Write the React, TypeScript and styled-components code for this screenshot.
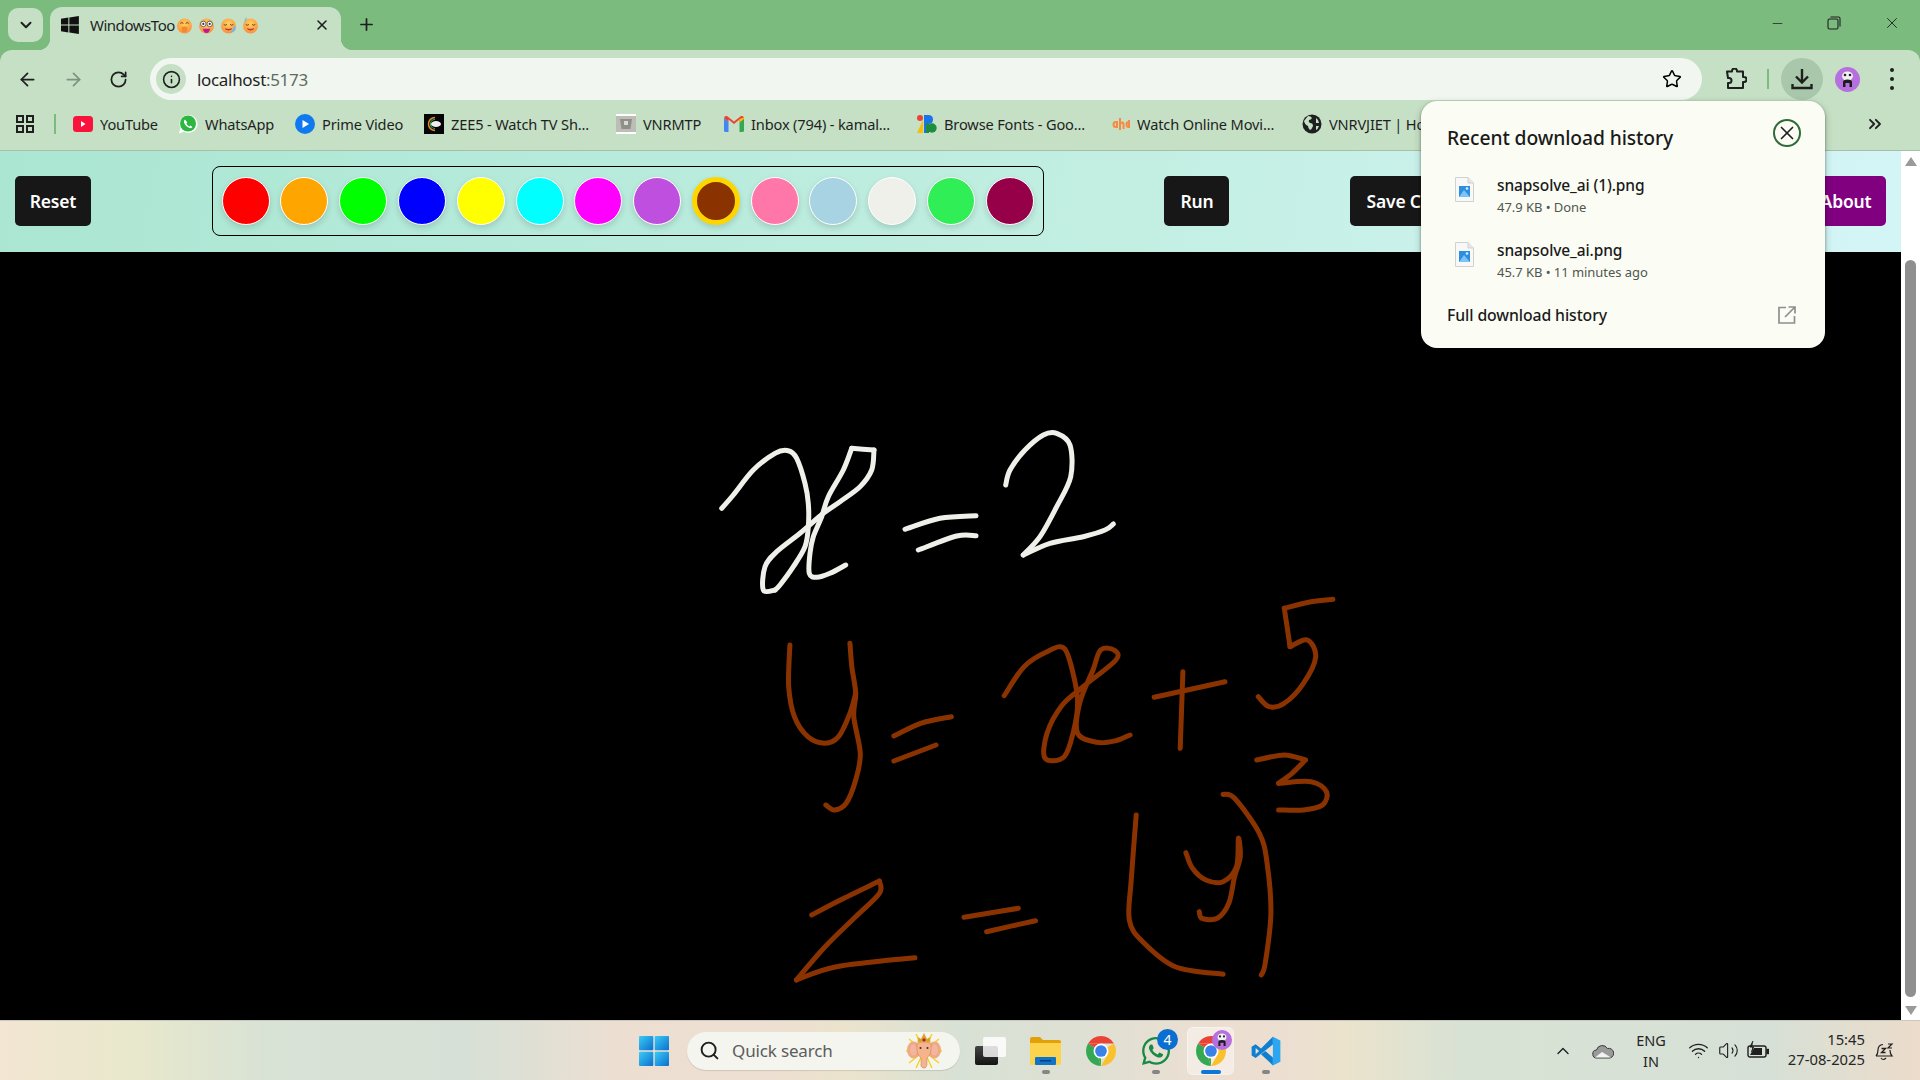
import React from 'react';
import styled, { createGlobalStyle } from 'styled-components';
import { ArrowLeft, ArrowRight, RotateCw, Info, Star, X, Plus, ChevronDown, ChevronUp, ChevronsRight, Search, Wifi, Volume2, Minus } from 'lucide-react';
import { FaWhatsapp } from 'react-icons/fa';

const UI = '"Noto Sans", "Open Sans", sans-serif';

const Global = createGlobalStyle`
  html, body { margin: 0; padding: 0; background: #000; }
  * { box-sizing: border-box; }
`;

const Screen = styled.div`
  position: relative;
  width: 1920px;
  height: 1080px;
  overflow: hidden;
  display: flex;
  flex-direction: column;
  font-family: ${UI};
  background: #7bbb7e;
`;

/* ---------- tab strip ---------- */
const TabStrip = styled.div`
  height: 50px;
  flex: none;
  display: flex;
  align-items: flex-end;
  padding-left: 8px;
  background: #7bbb7e;
`;
const TabSearch = styled.div`
  width: 35px;
  height: 34px;
  margin-bottom: 8px;
  border-radius: 10px;
  background: #c5e0c5;
  display: flex;
  align-items: center;
  justify-content: center;
  color: #1f1f1f;
`;
const Tab = styled.div`
  position: relative;
  width: 291px;
  height: 43px;
  margin-left: 7px;
  padding: 0 11px 7px 11px;
  border-radius: 12px 12px 0 0;
  background: #c5e0c5;
  display: flex;
  align-items: center;
  &::before, &::after {
    content: '';
    position: absolute;
    bottom: 0;
    width: 12px;
    height: 12px;
  }
  &::before { left: -12px; background: radial-gradient(circle at 0 0, transparent 12px, #c5e0c5 12.5px); }
  &::after { right: -12px; background: radial-gradient(circle at 100% 0, transparent 12px, #c5e0c5 12.5px); }
`;
const TabTitle = styled.span`
  margin-left: 11px;
  font-size: 15px;
  letter-spacing: -0.45px;
  color: #1f1f1f;
  width: 85px;
  white-space: nowrap;
`;
const EmojiRow = styled.span`
  display: flex;
  align-items: center;
  gap: 5px;
  width: 134px;
  margin-left: 1px;
`;
const TabClose = styled.span`
  display: flex;
  margin-left: 5px;
  color: #1f1f1f;
`;
const NewTab = styled.div`
  margin: 0 0 16px 16px;
  display: flex;
  color: #1f1f1f;
`;
const WinControls = styled.div`
  margin-left: auto;
  height: 50px;
  display: flex;
  align-items: center;
  padding-right: 19px;
  gap: 42px;
  padding-bottom: 4px;
  color: #1f1f1f;
`;

/* ---------- browser toolbar ---------- */
const Toolbar = styled.div`
  height: 50px;
  flex: none;
  background: #c5e0c5;
  border-radius: 12px 12px 0 0;
  display: flex;
  align-items: flex-start;
  padding-top: 8px;
`;
const NavIcons = styled.div`
  width: 150px;
  height: 42px;
  display: flex;
  align-items: center;
  padding-left: 17px;
  gap: 25px;
  color: #1f1f1f;
`;
const Omnibox = styled.div`
  width: 1552px;
  height: 42px;
  border-radius: 21px;
  background: #f1f7f0;
  display: flex;
  align-items: center;
  padding: 0 20px 0 6px;
`;
const InfoChip = styled.div`
  width: 30px;
  height: 30px;
  border-radius: 50%;
  background: #c5e0c5;
  display: flex;
  align-items: center;
  justify-content: center;
  color: #1f1f1f;
`;
const UrlText = styled.span`
  margin-left: 11px;
  flex: 1;
  font-size: 17px;
  letter-spacing: -0.32px;
  color: #1f1f1f;
`;
const UrlPort = styled.span`
  color: #5d6b5f;
`;
const ToolIcons = styled.div`
  flex: 1;
  height: 42px;
  display: flex;
  align-items: center;
  padding-left: 23px;
  color: #1f1f1f;
`;
const Divider = styled.span`
  width: 2px;
  height: 20px;
  background: #7bbb7e;
  margin: 0 12px 0 20px;
`;
const DownloadBtn = styled.div`
  width: 42px;
  height: 42px;
  margin-right: 12px;
  border-radius: 50%;
  background: #a9c7ab;
  display: flex;
  align-items: center;
  justify-content: center;
`;
const Kebab = styled.div`
  margin-left: 30px;
  display: flex;
  flex-direction: column;
  gap: 5px;
`;
const KebabDot = styled.span`
  width: 4px;
  height: 4px;
  border-radius: 50%;
  background: #1f1f1f;
`;

/* ---------- bookmarks ---------- */
const BookmarksBar = styled.div`
  height: 51px;
  flex: none;
  background: #c5e0c5;
  border-bottom: 1px solid #a8bea8;
  display: flex;
  align-items: center;
  padding: 0 0 3px 16px;
  position: relative;
  overflow: hidden;
`;
const BarSep = styled.span`
  width: 2px;
  height: 20px;
  background: #7bbb7e;
  margin: 0 17px 0 20px;
`;
const Bookmark = styled.div`
  display: flex;
  align-items: center;
  gap: 7px;
  flex: none;
`;
const BookmarkIcon = styled.span`
  width: 20px;
  height: 20px;
  display: flex;
  align-items: center;
  justify-content: center;
`;
const BookmarkLabel = styled.span<{ $w: number }>`
  width: ${p => p.$w}px;
  font-size: 14.6px;
  letter-spacing: -0.15px;
  color: #1f1f1f;
  white-space: nowrap;
  overflow: hidden;
`;
const Overflow = styled.span`
  position: absolute;
  right: 35px;
  top: 14px;
  display: flex;
  color: #1f1f1f;
`;

/* ---------- page ---------- */
const Viewport = styled.div`
  height: 869px;
  flex: none;
  display: flex;
`;
const Page = styled.div`
  flex: 1;
  min-width: 0;
  display: flex;
  flex-direction: column;
`;
const AppBar = styled.div`
  height: 101px;
  flex: none;
  display: flex;
  align-items: center;
  gap: 120.7px;
  padding: 0 15px 2px;
  background: linear-gradient(100deg, #aae6d2 0%, #c3efe3 60%, #d4f5f6 100%);
`;
const Btn = styled.button<{ $bg?: string; $w: number }>`
  width: ${p => p.$w}px;
  height: 50px;
  border: none;
  border-radius: 5px;
  background: ${p => p.$bg ?? '#171717'};
  color: #fff;
  font-family: ${UI};
  font-weight: 600;
  font-size: 17.5px;
  letter-spacing: -0.2px;
  padding: 0;
  white-space: nowrap;
  flex: none;
`;
const AboutBtn = styled(Btn)`
  margin-left: auto;
`;
const Palette = styled.div`
  width: 832px;
  height: 70px;
  flex: none;
  border: 1.5px solid #000;
  border-radius: 8px;
  display: flex;
  align-items: center;
  justify-content: space-between;
  padding: 0 9px;
`;
const Swatch = styled.span<{ $c: string; $on?: boolean }>`
  width: 48px;
  height: 48px;
  border-radius: 50%;
  background: ${p => p.$c};
  border: ${p => (p.$on ? '5px solid #ffd500' : '1.5px solid #fff')};
  box-shadow: 0 3px 6px rgba(0, 0, 0, 0.14);
`;
const Canvas = styled.div`
  flex: 1;
  background: #000;
  display: flex;
`;
const Strokes = styled.svg`
  width: 1901px;
  height: 768px;
  display: block;
`;
const ScrollTrack = styled.div`
  width: 19px;
  flex: none;
  background: #fff;
  display: flex;
  flex-direction: column;
  align-items: center;
  padding-top: 6px;
`;
const ScrollThumb = styled.div`
  width: 11px;
  height: 737px;
  margin: 94px 0 9px;
  border-radius: 6px;
  background: #8f8f8f;
`;
const ArrowUp = styled.span`
  width: 0;
  height: 0;
  border-left: 6px solid transparent;
  border-right: 6px solid transparent;
  border-bottom: 9px solid #9a9a9a;
`;
const ArrowDown = styled.span`
  width: 0;
  height: 0;
  border-left: 6px solid transparent;
  border-right: 6px solid transparent;
  border-top: 9px solid #9a9a9a;
`;

/* ---------- downloads popup ---------- */
const Popup = styled.div`
  position: absolute;
  left: 1421px;
  top: 101px;
  width: 404px;
  height: 247px;
  border-radius: 16px;
  background: #fbfdf5;
  box-shadow: 0 1px 3px rgba(0, 0, 0, 0.4), 0 3px 8px rgba(0, 0, 0, 0.2);
  padding: 0 29px 0 26px;
  display: flex;
  flex-direction: column;
`;
const PopupHead = styled.div`
  height: 62px;
  flex: none;
  display: flex;
  align-items: center;
  justify-content: space-between;
  padding-top: 4px;
`;
const PopupTitle = styled.span`
  font-size: 19.3px;
  font-weight: 500;
  letter-spacing: -0.1px;
  color: #1a1a1a;
  margin-top: 6px;
`;
const CloseRing = styled.span`
  width: 28px;
  height: 28px;
  margin: -2px -5px 0 0;
  border-radius: 50%;
  border: 2px solid #2f6b38;
  display: flex;
  align-items: center;
  justify-content: center;
  color: #1f1f1f;
`;
const FileRow = styled.div`
  height: 65px;
  flex: none;
  display: flex;
  align-items: center;
  gap: 23px;
  padding-left: 8px;
`;
const FileGlyph = styled.span`
  display: flex;
  align-self: flex-start;
  margin-top: 14px;
`;
const FileText = styled.div`
  display: flex;
  flex-direction: column;
  gap: 3px;
`;
const FileName = styled.span`
  font-size: 15.5px;
  font-weight: 500;
  line-height: 20px;
  letter-spacing: -0.1px;
  color: #1a1a1a;
`;
const FileMeta = styled.span`
  font-size: 13px;
  line-height: 18px;
  letter-spacing: -0.05px;
  color: #50564f;
`;
const PopupFoot = styled.div`
  flex: 1;
  display: flex;
  align-items: center;
  justify-content: space-between;
  padding-bottom: 11px;
`;
const FootLink = styled.span`
  font-size: 15.8px;
  font-weight: 500;
  letter-spacing: -0.1px;
  color: #1a1a1a;
`;

/* ---------- taskbar ---------- */
const Taskbar = styled.div`
  height: 60px;
  flex: none;
  display: flex;
  align-items: center;
  border-top: 1px solid #c9c9c0;
  background: linear-gradient(90deg, #f3e6d2 0%, #e8e8cc 7%, #d8e2d5 14%, #d6e0d6 24%, #ecdfd2 32%, #eddfd2 40%, #ebe3cc 44%, #d8e1d5 50%, #dfe0d3 57%, #ecdfd2 63%, #ecdfd2 67%, #ebe3cc 70%, #d8e2d4 76%, #d6e0d6 92%, #ecdccb 100%);
`;
const StartBtn = styled.div`
  width: 54px;
  margin-left: 627px;
  display: flex;
  justify-content: center;
`;
const SearchBox = styled.div`
  width: 273px;
  height: 38px;
  margin-left: 6px;
  border-radius: 19px;
  background: #f4f5ef;
  box-shadow: 0 1px 1px rgba(0, 0, 0, 0.12);
  display: flex;
  align-items: center;
  padding: 0 16px 0 12px;
  color: #1f1f1f;
`;
const SearchText = styled.span`
  flex: 1;
  margin-left: 12px;
  font-size: 17px;
  letter-spacing: -0.15px;
  line-height: 1;
  color: #5c5c5c;
`;
const Pinned = styled.div`
  display: flex;
  margin-left: 3px;
`;
const PinnedItem = styled.div<{ $active?: boolean }>`
  position: relative;
  width: 55px;
  height: 48px;
  display: flex;
  align-items: center;
  justify-content: center;
  ${p => p.$active && `
    &::before {
      content: '';
      position: absolute;
      inset: 0 4px;
      border-radius: 6px;
      background: rgba(255, 255, 255, 0.42);
      box-shadow: inset 0 0 0 1px rgba(255, 255, 255, 0.3);
    }
    & > svg { position: relative; }
  `}
`;
const RunDot = styled.span<{ $active?: boolean }>`
  position: absolute;
  bottom: 1px;
  left: 50%;
  transform: translateX(-50%);
  height: 4px;
  border-radius: 2px;
  width: ${p => (p.$active ? 20 : 8)}px;
  background: ${p => (p.$active ? '#0a78d4' : '#858585')};
`;
const Badge = styled.span`
  position: absolute;
  top: 2px;
  right: 5px;
  width: 21px;
  height: 21px;
  border-radius: 50%;
  background: #0a6fd0;
  color: #fff;
  font-size: 14px;
  display: flex;
  align-items: center;
  justify-content: center;
`;
const ProfileBadge = styled.span`
  position: absolute;
  top: 3px;
  right: 6px;
  display: flex;
`;
const Tray = styled.div`
  margin-left: auto;
  padding-right: 16px;
  display: flex;
  align-items: center;
  color: #1f1f1f;
`;
const TraySlot = styled.div<{ $w: number }>`
  width: ${p => p.$w}px;
  display: flex;
  justify-content: center;
  align-items: center;
`;
const TrayGap = styled.span`
  width: 10px;
`;
const Lang = styled.div`
  width: 52px;
  margin: 0 6px 0 7px;
  text-align: center;
  font-size: 14.5px;
  line-height: 21px;
  color: #262626;
`;
const Clock = styled.div`
  width: 92px;
  margin-top: -3px;
  text-align: right;
  font-size: 14.8px;
  line-height: 20px;
  color: #262626;
  white-space: nowrap;
`;

/* ---------- drawings ---------- */
const Win = ({ size = 18 }: { size?: number }) => (
  <svg width={size} height={size} viewBox="0 0 18 18">
    <path fill="#111" d="M0 2.6 7.4 1.5V8.4H0ZM8.4 1.4 18 0V8.4H8.4ZM0 9.4H7.4V16.5L0 15.4ZM8.4 9.4H18V18L8.4 16.6Z" />
  </svg>
);

const Face = ({ kind }: { kind: number }) => (
  <svg width="17" height="17" viewBox="0 0 16 16">
    <defs>
      <radialGradient id={`f${kind}`} cx="0.5" cy="0.35" r="0.7">
        <stop offset="0" stopColor="#ffd15a" />
        <stop offset="1" stopColor="#f98a3c" />
      </radialGradient>
    </defs>
    {kind === 3 && <path d="M3 6 Q1 2 5 0 Q3 3 5 5Z" fill="#6fb7ef" />}
    <circle cx="8" cy="8.5" r="7" fill={`url(#f${kind})`} />
    {kind === 0 && <path d="M5 10 q3-2 6 0 l-1 4 h-4z" fill="#ef8a30" />}
    {kind === 0 && <path d="M4 6 q1.500-1.500 3 0 M9 6 q1.500-1.500 3 0" stroke="#6b3a20" strokeWidth=".9" fill="none" />}
    {kind === 1 && (
      <>
        <circle cx="5" cy="6.500" r="2.600" fill="#fff" stroke="#5b5b5b" strokeWidth=".9" />
        <circle cx="11" cy="6.500" r="2.600" fill="#fff" stroke="#5b5b5b" strokeWidth=".9" />
        <circle cx="5" cy="6.500" r="1" fill="#333" />
        <circle cx="11" cy="6.500" r="1" fill="#333" />
        <path d="M4.500 11 h7 q-1 4-3.500 4 q-2.500 0-3.500-4z" fill="#c2188f" />
      </>
    )}
    {kind >= 2 && (
      <>
        <path d="M3.500 7 q1.500 1.500 3 0 M9.500 7 q1.500 1.500 3 0" stroke="#6b3a20" strokeWidth=".9" fill="none" />
        <path d="M5 11 q3 2.500 6 0" stroke="#a33030" strokeWidth="1" fill="#d3455a" />
      </>
    )}
    {kind === 2 && <path d="M13 8 q3 2 1 5 q-2 2-4 1 q3-2 3-6z" fill="#6fb7ef" />}
  </svg>
);

const ExtensionIcon = () => (
  <svg width="22" height="22" viewBox="0 0 22 22" fill="none" stroke="#1f1f1f" strokeWidth="2" strokeLinejoin="round">
    <path d="M2 3.500 H7 V3 a2.500 2.500 0 0 1 5 0 V3.500 H18 V9 h1 a2.500 2.500 0 0 1 0 5 h-1 V20 H3 V15 h1 a2.500 2.500 0 0 0 0-5 H3Z" />
  </svg>
);

const Avatar = ({ size = 25 }: { size?: number }) => (
  <svg width={size} height={size} viewBox="0 0 25 25">
    <circle cx="12.500" cy="12.500" r="12.500" fill="#b66fdf" />
    <ellipse cx="12.500" cy="9" rx="5.500" ry="4.500" fill="#f0f0f0" />
    <circle cx="10" cy="8" r="1.300" fill="#222" />
    <circle cx="15" cy="8" r="1.300" fill="#222" />
    <path d="M8 20 V15 q0-2.500 4.500-2.500 T17 15 V20 H14.500 V16 H10.500 V20Z" fill="#1c1c1c" />
  </svg>
);

const Youtube = () => (
  <svg width="20" height="16" viewBox="0 0 20 16">
    <rect width="20" height="16" rx="3.500" fill="#f8123c" />
    <path d="M8 5 12.500 8 8 11Z" fill="#fff" />
  </svg>
);
const WhatsBookmark = () => (
  <svg width="20" height="20" viewBox="0 0 20 20">
    <path d="M1 19.500 2.500 14 A9 9 0 1 1 6 17.700Z" fill="#fff" />
    <circle cx="10" cy="9.500" r="8" fill="#2bb741" />
    <path d="M7 5.500 q-1.500 1-1 3 q1.500 4 5.500 5.500 q2 .500 3-1 l-2.200-1.500 -1 1 q-2-1-3-3 l1-1z" fill="#fff" />
  </svg>
);
const Prime = () => (
  <svg width="20" height="20" viewBox="0 0 20 20">
    <circle cx="10" cy="10" r="10" fill="#0f79f0" />
    <path d="M7.500 6 14 10 7.500 14Z" fill="#fff" />
  </svg>
);
const Zee = () => (
  <svg width="20" height="20" viewBox="0 0 20 20">
    <rect width="20" height="20" fill="#050505" />
    <path d="M11 3.500 A6.500 6.500 0 0 0 11 16.500" fill="none" stroke="#e8862a" strokeWidth="1.500" />
    <path d="M11 5.500 A4.500 4.500 0 0 0 11 14.500" fill="none" stroke="#27b36a" strokeWidth="1.200" />
    <ellipse cx="12" cy="10" rx="5" ry="3" fill="#eee" />
  </svg>
);
const Vnr = () => (
  <svg width="20" height="20" viewBox="0 0 20 20">
    <rect width="20" height="20" fill="#fff" />
    <rect y="2" width="20" height="16" fill="#bdbdb8" />
    <path d="M4 5 H16 L14.500 15 H5.500Z" fill="#8f8f8a" />
    <rect x="8" y="7" width="4" height="4" fill="#d8d8d4" />
  </svg>
);
const Gmail = () => (
  <svg width="20" height="16" viewBox="0 0 20 16">
    <path d="M0 2 V14.500 Q0 16 1.500 16 H4.500 V6Z" fill="#4285f4" />
    <path d="M20 2 V14.500 Q20 16 18.500 16 H15.500 V6Z" fill="#34a853" />
    <path d="M0 2 Q.5 0 2 0 H3 L10 5.500 17 0 H18 Q19.500 0 20 2 L15.500 6 V3.500 L10 8 4.500 3.500 V6 L0 2Z" fill="#ea4335" />
    <path d="M15.500 3 20 1.500 V3 L15.500 6.500Z" fill="#fbbc04" />
  </svg>
);
const Fonts = () => (
  <svg width="20" height="18" viewBox="0 0 20 18">
    <path d="M0 18 6 5 V18Z" fill="#fbbc04" />
    <circle cx="3" cy="3" r="3" fill="#ea4335" />
    <path d="M7 0 H12 V18 H7Z" fill="#1a73e8" />
    <path d="M12 0 a4.500 4.500 0 0 1 4 4.500 a4.500 4.500 0 0 1-4 4.500Z" fill="#1a73e8" />
    <circle cx="15" cy="13" r="4.700" fill="#1e8e3e" />
    <path d="M12 8.500 V18 H9 V8.500Z" fill="#1e8e3e" />
  </svg>
);
const Aha = () => (
  <svg width="20" height="14" viewBox="0 0 20 14" fill="none" stroke="#f58a42" strokeWidth="2">
    <path d="M6 5 a2.500 2.500 0 1 0 0 5 h1 V5 M7 10 V4" />
    <path d="M10 1 V13 M10 7 q3-3 3.500 0 V12" />
    <path d="M19 5 a2.500 2.500 0 1 0 0 5 M19 3 V11" />
  </svg>
);
const Globe = () => (
  <svg width="20" height="20" viewBox="0 0 20 20">
    <circle cx="10" cy="10" r="9.500" fill="#1f1f1f" />
    <path d="M6 2 q3 0 4 2 q-1 2-3 2 q-1 2 1 3 q3 0 3 3 q-1 3-3 4 q-2-2-2-4 q-3-1-4-5z M14 4 q3 2 3 5 l-3 0z M14 12 l3 0 q-1 3-3 4z" fill="#c5e0c5" />
  </svg>
);

const AppsGrid = () => (
  <svg width="18" height="18" viewBox="0 0 18 18" fill="none" stroke="#1f1f1f" strokeWidth="2">
    <rect x="1" y="1" width="6" height="6" />
    <rect x="11" y="1" width="6" height="6" />
    <rect x="1" y="11" width="6" height="6" />
    <rect x="11" y="11" width="6" height="6" />
  </svg>
);

const Restore = () => (
  <svg width="14" height="14" viewBox="0 0 14 14" fill="none" stroke="#1f1f1f" strokeWidth="1.100">
    <rect x="1" y="3" width="10" height="10" rx="1.500" />
    <path d="M3.500 1 H11.500 Q13 1 13 2.500 V10.500" />
  </svg>
);

const DownloadGlyph = () => (
  <svg width="22" height="22" viewBox="0 0 22 22" fill="none" stroke="#1f1f1f" strokeWidth="2.400">
    <path d="M11 1 V14 M5 8.500 11 14.500 17 8.500" />
    <path d="M1.500 16 V20 H20.500 V16" strokeWidth="2.400" />
  </svg>
);

const FileIcon = () => (
  <svg width="19" height="25" viewBox="0 0 19 25">
    <path d="M.5.500 H13 L18.500 6 V24.500 H.5Z" fill="#f8f8f8" stroke="#d0d2d0" />
    <path d="M13 .500 V6 H18.500" fill="#e6e6e6" stroke="#d0d2d0" />
    <rect x="4" y="9" width="11" height="11" fill="#2d8de0" />
    <path d="M4 20 9 13 15 20Z" fill="#7cc4f5" />
    <circle cx="12" cy="11.500" r="1.300" fill="#d8efff" />
  </svg>
);

const OpenExternal = () => (
  <svg width="18" height="18" viewBox="0 0 18 18" fill="none" stroke="#8d8f8c" strokeWidth="1.700">
    <path d="M8 1.500 H1 V17 H16.500 V10" />
    <path d="M10.500 1 H17 V7.500 M17 1 7 11" />
  </svg>
);

const StartLogo = () => (
  <svg width="30" height="30" viewBox="0 0 30 30">
    <defs>
      <linearGradient id="st" x1="0" y1="0" x2="1" y2="1">
        <stop offset="0" stopColor="#3ccbf4" />
        <stop offset="1" stopColor="#0a6fd0" />
      </linearGradient>
    </defs>
    <rect x="0" y="0" width="14.300" height="14.300" rx="1" fill="url(#st)" />
    <rect x="15.700" y="0" width="14.300" height="14.300" rx="1" fill="url(#st)" />
    <rect x="0" y="15.700" width="14.300" height="14.300" rx="1" fill="url(#st)" />
    <rect x="15.700" y="15.700" width="14.300" height="14.300" rx="1" fill="url(#st)" />
  </svg>
);

const Ganesha = () => (
  <svg width="40" height="38" viewBox="0 0 40 38">
    <g stroke="#f6d21c" strokeWidth="1.400">
      <path d="M2 19 H38 M5 7 35 31 M35 7 5 31 M12 2 28 36 M28 2 12 36" />
    </g>
    <ellipse cx="9.500" cy="18" rx="6.500" ry="8.500" fill="#f0a981" />
    <ellipse cx="30.500" cy="18" rx="6.500" ry="8.500" fill="#f0a981" />
    <ellipse cx="9.500" cy="18" rx="3.500" ry="5.500" fill="#f4b5a0" />
    <ellipse cx="30.500" cy="18" rx="3.500" ry="5.500" fill="#f4b5a0" />
    <path d="M13 12 Q20 8 27 12 Q28 22 23 26 V33 Q22 37 19 36 Q16 35 17 31 V26 Q12 22 13 12Z" fill="#f6b48e" stroke="#c7784d" strokeWidth=".5" />
    <path d="M13.500 11 L14 5 L17 7 L20 1 L23 7 L26 5 L26.500 11 Q20 8 13.500 11Z" fill="#d8a52a" />
    <circle cx="20" cy="8" r="1.700" fill="#c0203a" />
    <circle cx="16.500" cy="16" r="1" fill="#332" />
    <circle cx="23.500" cy="16" r="1" fill="#332" />
  </svg>
);

const TaskView = () => (
  <svg width="31" height="28" viewBox="0 0 31 28">
    <defs>
      <linearGradient id="tv" x1="0" y1="0" x2="0" y2="1">
        <stop offset="0" stopColor="#444" />
        <stop offset="1" stopColor="#141414" />
      </linearGradient>
    </defs>
    <rect x="0" y="9" width="23" height="19" rx="2" fill="url(#tv)" />
    <rect x="8" y="0" width="23" height="20" rx="2" fill="#fff" fillOpacity=".82" />
  </svg>
);

const Folder = () => (
  <svg width="31" height="28" viewBox="0 0 31 28">
    <path d="M0 2 Q0 0 2 0 H10 L13 3 H29 Q31 3 31 5 V10 H0Z" fill="#e3a008" />
    <path d="M0 6 H31 V26 Q31 28 29 28 H2 Q0 28 0 26Z" fill="#fcd34d" />
    <rect x="5" y="20" width="21" height="8" rx="1" fill="#0f73c9" />
    <rect x="10" y="23" width="11" height="1.500" fill="#0a3d7a" />
  </svg>
);

const ChromeLogo = ({ size = 30 }: { size?: number }) => (
  <svg width={size} height={size} viewBox="0 0 40 40">
    <path d="M2.680 10 A20 20 0 0 1 37.320 10 H20Z" fill="#ea4335" />
    <path d="M37.320 10 A20 20 0 0 1 20 40 L28.660 25Z" fill="#fbc02d" />
    <path d="M20 40 A20 20 0 0 1 2.680 10 L11.340 15Z" fill="#34a853" />
    <path d="M20 20 L2.680 10 L20 10Z" fill="#ea4335" />
    <path d="M20 20 L37.320 10 L28.660 25Z" fill="#fbc02d" />
    <path d="M20 20 L20 40 L11.340 15Z" fill="#34a853" />
    <circle cx="20" cy="20" r="10" fill="#fff" />
    <circle cx="20" cy="20" r="7.800" fill="#3b82e8" />
  </svg>
);

const WhatsTask = () => <FaWhatsapp size={32} color="#178a45" />;

const VsCode = () => (
  <svg width="30" height="30" viewBox="0 0 24 24">
    <path d="M17.500 0.500 L23.500 3.500 V20.500 L17.500 23.500 Z" fill="#2aa7f0" />
    <path d="M17.500 .500 L17.500 6.800 L3.700 17.500 L.500 15.500 V8.500 L3.700 6.500 L8 10 Z M17.500 23.500 L17.500 17.200 L11.500 12 L8 14.500 Z M3.700 9.500 V14.500 L6.500 12Z" fill="#0f7fd1" fillRule="evenodd" />
  </svg>
);

const CloudIcon = () => (
  <svg width="22" height="16" viewBox="0 0 22 16">
    <path d="M5 15 a4 4 0 0 1-.5-8 a6 6 0 0 1 11-1.500 a4.500 4.500 0 0 1 2.500 9.500Z" fill="#9a9a9a" stroke="#3a3a3a" strokeWidth="1" />
    <path d="M3 14.500 L10 9 L19 14.500Z" fill="#f2f2f2" />
  </svg>
);

const BatteryIcon = () => (
  <svg width="22" height="20" viewBox="0 0 22 20" fill="none" stroke="#1f1f1f" strokeWidth="1.400">
    <rect x="1" y="5" width="18" height="11" rx="2" />
    <rect x="20" y="8.500" width="1.500" height="4" fill="#1f1f1f" />
    <path d="M3 14 L7 7 H15 V14Z" fill="#1f1f1f" stroke="none" />
    <path d="M6 0 L3 6 H6.500 L4.500 11" fill="#1f1f1f" strokeWidth="1" />
  </svg>
);

const BellSnooze = () => (
  <svg width="20" height="20" viewBox="0 0 20 20" fill="none" stroke="#1f1f1f" strokeWidth="1.200">
    <path d="M1 15 Q3 13 3 9 Q3 4 8 3.500 M15 9 Q15 13 17 15 H1 M6 17 Q8 20 11 17" />
    <path d="M6.500 7.500 H10.500 L6.500 11.500 H10.500" strokeWidth="1.300" />
    <path d="M13 3 H17 L13 7 H17" strokeWidth="1.200" />
  </svg>
);

/* Handwritten strokes, smoothed through the sampled points. */
type P = [number, number];
const smooth = (pts: P[]) => {
  let d = `M${pts[0][0].toFixed(1)} ${pts[0][1].toFixed(1)}`;
  for (let i = 0; i < pts.length - 1; i++) {
    const p0 = pts[i - 1] ?? pts[i];
    const p1 = pts[i];
    const p2 = pts[i + 1];
    const p3 = pts[i + 2] ?? p2;
    const c1: P = [p1[0] + (p2[0] - p0[0]) / 6, p1[1] + (p2[1] - p0[1]) / 6];
    const c2: P = [p2[0] - (p3[0] - p1[0]) / 6, p2[1] - (p3[1] - p1[1]) / 6];
    d += ` C${c1[0].toFixed(1)} ${c1[1].toFixed(1)} ${c2[0].toFixed(1)} ${c2[1].toFixed(1)} ${p2[0].toFixed(1)} ${p2[1].toFixed(1)}`;
  }
  return d;
};
const top = (pts: P[]): P[] => pts.map(([x, y]) => [700 + x / 3, 168 + y / 3]);
const low = (pts: P[]): P[] => pts.map(([x, y]) => [760 + x / 2.613, 328 + y / 3]);

const whiteStrokes: P[][] = [
  [[65,265],[100,225],[160,150],[225,100],[265,92],[290,115],[315,190],[325,250],[325,320],[315,380],[280,440],[240,495],[225,510]],
  [[225,510],[190,510],[195,440],[230,395],[300,340],[370,280],[420,245],[480,200],[515,150],[522,90]],
  [[522,90],[455,85]],
  [[455,85],[430,150],[385,230],[365,290],[340,350],[330,400],[328,460],[350,472],[390,460],[437,435]],
  [[615,328],[720,295],[828,287]],
  [[655,390],[770,348],[828,347]],
  [[917,195],[930,150],[975,90],[1030,45],[1070,40],[1110,75],[1112,170],[1070,260],[1020,350],[970,405]],
  [[970,405],[1050,370],[1150,350],[1215,330],[1240,312]],
].map(top);

const brownStrokes: P[][] = [
  [[78,195],[75,320],[90,410],[125,470],[170,490],[205,470],[235,400],[250,340]],
  [[235,190],[240,260],[250,340],[245,410],[262,520],[250,600],[225,670],[195,690],[172,675]],
  [[350,468],[420,430],[500,410]],
  [[350,543],[460,495]],
  [[638,347],[690,260],[750,215],[795,205],[820,290],[830,370],[820,450],[795,530],[745,535],[750,460],[790,375],[850,315],[930,240],[925,210],[890,210],[870,270],[835,370],[830,460],[880,487],[930,482],[967,465]],
  [[1030,352],[1215,305]],
  [[1105,275],[1098,505]],
  [[1497,58],[1440,65],[1370,85]],
  [[1370,85],[1385,200]],
  [[1385,200],[1430,180],[1452,230],[1420,310],[1370,370],[1330,380],[1302,350]],
  [[1298,540],[1370,525],[1425,540]],
  [[1425,540],[1390,580],[1355,610]],
  [[1355,610],[1440,605],[1480,635],[1470,675],[1420,690],[1355,690]],
  [[135,1005],[210,960],[312,903]],
  [[312,903],[312,940],[250,1010],[170,1100],[95,1200]],
  [[95,1200],[200,1160],[405,1133]],
  [[533,1012],[675,985]],
  [[592,1055],[720,1022]],
  [[983,705],[970,900],[965,1020],[1000,1085],[1085,1160],[1210,1183]],
  [[1113,818],[1130,865],[1165,900],[1210,905],[1245,860],[1250,775],[1255,830],[1240,890],[1225,970],[1195,1015],[1155,1015],[1148,995]],
  [[1210,643],[1240,655],[1305,760],[1325,850],[1335,1000],[1320,1150],[1310,1185]],
].map(low);

const swatches = ['#ff0000', '#ffa500', '#00ff00', '#0000ff', '#ffff00', '#00ffff', '#ff00ff', '#bf4fdf', '#8b3300', '#ff77a8', '#a8d3e2', '#f0f0eb', '#30ee55', '#960048'];

const bookmarks: { icon: React.ReactNode; label: string; w: number }[] = [
  { icon: <Youtube />, label: 'YouTube', w: 78 },
  { icon: <WhatsBookmark />, label: 'WhatsApp', w: 90 },
  { icon: <Prime />, label: 'Prime Video', w: 102 },
  { icon: <Zee />, label: 'ZEE5 - Watch TV Sh...', w: 165 },
  { icon: <Vnr />, label: 'VNRMTP', w: 81 },
  { icon: <Gmail />, label: 'Inbox (794) - kamal...', w: 166 },
  { icon: <Fonts />, label: 'Browse Fonts - Goo...', w: 166 },
  { icon: <Aha />, label: 'Watch Online Movi...', w: 165 },
  { icon: <Globe />, label: 'VNRVJIET | Home...', w: 300 },
];

export default function App() {
  return (
    <Screen>
      <Global />
      <TabStrip>
        <TabSearch><ChevronDown size={18} strokeWidth={2.6} /></TabSearch>
        <Tab>
          <Win />
          <TabTitle>WindowsToo</TabTitle>
          <EmojiRow>
            <Face kind={0} /><Face kind={1} /><Face kind={2} /><Face kind={3} />
          </EmojiRow>
          <TabClose><X size={16} strokeWidth={2.4} /></TabClose>
        </Tab>
        <NewTab><Plus size={19} strokeWidth={2.2} /></NewTab>
        <WinControls>
          <Minus size={15} strokeWidth={1.2} />
          <Restore />
          <X size={18} strokeWidth={1.2} />
        </WinControls>
      </TabStrip>

      <Toolbar>
        <NavIcons>
          <ArrowLeft size={21} strokeWidth={2} />
          <ArrowRight size={21} strokeWidth={2} color="#7f9081" />
          <RotateCw size={19} strokeWidth={2.2} />
        </NavIcons>
        <Omnibox>
          <InfoChip><Info size={19} strokeWidth={2} /></InfoChip>
          <UrlText>localhost<UrlPort>:5173</UrlPort></UrlText>
          <Star size={20} strokeWidth={1.8} />
        </Omnibox>
        <ToolIcons>
          <ExtensionIcon />
          <Divider />
          <DownloadBtn><DownloadGlyph /></DownloadBtn>
          <Avatar />
          <Kebab><KebabDot /><KebabDot /><KebabDot /></Kebab>
        </ToolIcons>
      </Toolbar>

      <BookmarksBar>
        <AppsGrid />
        <BarSep />
        {bookmarks.map(b => (
          <Bookmark key={b.label}>
            <BookmarkIcon>{b.icon}</BookmarkIcon>
            <BookmarkLabel $w={b.w}>{b.label}</BookmarkLabel>
          </Bookmark>
        ))}
        <Overflow><ChevronsRight size={20} strokeWidth={2.2} /></Overflow>
      </BookmarksBar>

      <Viewport>
        <Page>
          <AppBar>
            <Btn $w={76}>Reset</Btn>
            <Palette>
              {swatches.map(c => <Swatch key={c} $c={c} $on={c === '#8b3300'} />)}
            </Palette>
            <Btn $w={65}>Run</Btn>
            <Btn $w={136}>Save Canvas</Btn>
            <AboutBtn $w={80} $bg="#800080">About</AboutBtn>
          </AppBar>
          <Canvas>
            <Strokes viewBox="0 0 1901 768" fill="none" strokeLinecap="round" strokeLinejoin="round">
              {whiteStrokes.map((s, i) => <path key={i} d={smooth(s)} stroke="#f0f0eb" strokeWidth="5" />)}
              {brownStrokes.map((s, i) => <path key={i} d={smooth(s)} stroke="#8b3300" strokeWidth="5" />)}
            </Strokes>
          </Canvas>
        </Page>
        <ScrollTrack>
          <ArrowUp />
          <ScrollThumb />
          <ArrowDown />
        </ScrollTrack>
      </Viewport>

      <Taskbar>
        <StartBtn><StartLogo /></StartBtn>
        <SearchBox>
          <Search size={21} strokeWidth={2.2} />
          <SearchText>Quick search</SearchText>
          <Ganesha />
        </SearchBox>
        <Pinned>
          <PinnedItem><TaskView /></PinnedItem>
          <PinnedItem><Folder /><RunDot /></PinnedItem>
          <PinnedItem><ChromeLogo /></PinnedItem>
          <PinnedItem><WhatsTask /><Badge>4</Badge><RunDot /></PinnedItem>
          <PinnedItem $active><ChromeLogo /><ProfileBadge><Avatar size={20} /></ProfileBadge><RunDot $active /></PinnedItem>
          <PinnedItem><VsCode /><RunDot /></PinnedItem>
        </Pinned>
        <Tray>
          <TraySlot $w={30}><ChevronUp size={20} strokeWidth={1.6} /></TraySlot>
          <TrayGap />
          <TraySlot $w={30}><CloudIcon /></TraySlot>
          <Lang>ENG<br />IN</Lang>
          <TraySlot $w={30}><Wifi size={21} strokeWidth={1.5} /></TraySlot>
          <TraySlot $w={30}><Volume2 size={21} strokeWidth={1.3} /></TraySlot>
          <TraySlot $w={30}><BatteryIcon /></TraySlot>
          <Clock>15:45<br />27-08-2025</Clock>
          <TraySlot $w={39}><BellSnooze /></TraySlot>
        </Tray>
      </Taskbar>

      <Popup>
        <PopupHead>
          <PopupTitle>Recent download history</PopupTitle>
          <CloseRing><X size={22} strokeWidth={1.8} /></CloseRing>
        </PopupHead>
        <FileRow>
          <FileGlyph><FileIcon /></FileGlyph>
          <FileText>
            <FileName>snapsolve_ai (1).png</FileName>
            <FileMeta>47.9 KB • Done</FileMeta>
          </FileText>
        </FileRow>
        <FileRow>
          <FileGlyph><FileIcon /></FileGlyph>
          <FileText>
            <FileName>snapsolve_ai.png</FileName>
            <FileMeta>45.7 KB • 11 minutes ago</FileMeta>
          </FileText>
        </FileRow>
        <PopupFoot>
          <FootLink>Full download history</FootLink>
          <OpenExternal />
        </PopupFoot>
      </Popup>
    </Screen>
  );
}
